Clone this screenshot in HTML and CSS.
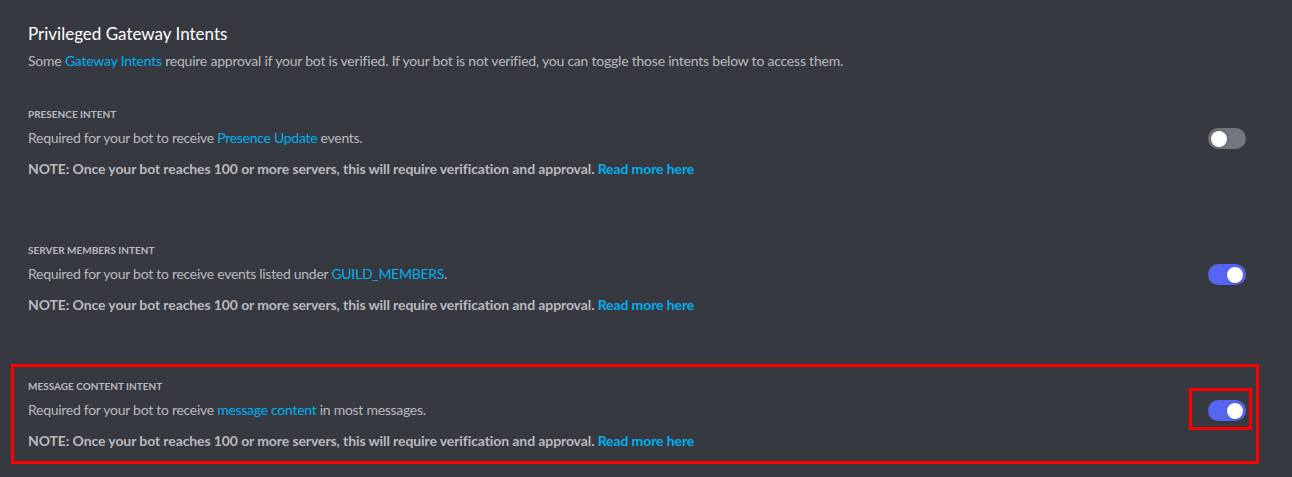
FILE: index.html
```html
<!DOCTYPE html>
<html lang="en">
<head>
<meta charset="utf-8">
<title>Privileged Gateway Intents</title>
<link rel="stylesheet" href="styles.css">
</head>
<body>
<main class="page">
  <header class="head">
    <h2 class="title">Privileged Gateway Intents</h2>
    <p class="desc">Some <a class="link" href="#">Gateway Intents</a> require approval if your bot is verified. If your bot is not verified, you can toggle those intents below to access them.</p>
  </header>

  <section class="intent">
    <h3 class="label">Presence Intent</h3>
    <div class="row">
      <p class="body">Required for your bot to receive <a class="link" href="#">Presence Update</a> events.</p>
      <div class="switch-wrap"><span class="switch off"><span class="knob"></span></span></div>
    </div>
    <p class="note">NOTE: Once your bot reaches 100 or more servers, this will require verification and approval. <a class="link strong" href="#">Read more here</a></p>
  </section>

  <section class="intent">
    <h3 class="label">Server Members Intent</h3>
    <div class="row">
      <p class="body">Required for your bot to receive events listed under <a class="link" href="#">GUILD_MEMBERS</a>.</p>
      <div class="switch-wrap"><span class="switch on"><span class="knob"></span></span></div>
    </div>
    <p class="note">NOTE: Once your bot reaches 100 or more servers, this will require verification and approval. <a class="link strong" href="#">Read more here</a></p>
  </section>

  <section class="intent highlighted">
    <h3 class="label">Message Content Intent</h3>
    <div class="row">
      <p class="body">Required for your bot to receive <a class="link" href="#">message content</a> in most messages.</p>
      <div class="switch-wrap marked"><span class="switch on"><span class="knob"></span></span></div>
    </div>
    <p class="note">NOTE: Once your bot reaches 100 or more servers, this will require verification and approval. <a class="link strong" href="#">Read more here</a></p>
  </section>
</main>
</body>
</html>
```

FILE: styles.css
```css
html, body {
  margin: 0;
  padding: 0;
  background: #36393f;
  height: 100%;
}
body {
  font-family: "Lato", "Open Sans", sans-serif;
  color: #b9bbbe;
  overflow: hidden;
}
.page {
  padding: 22px 33px 0 11px;
}
.head {
  padding-left: 17px;
}
.title {
  margin: 0;
  font-size: 17px;
  line-height: 24px;
  font-weight: 400;
  color: #ffffff;
}
.desc {
  margin: 5px 0 0;
  font-size: 14px;
  line-height: 20px;
  letter-spacing: -0.22px;
}
.link {
  color: #00b0f4;
  text-decoration: none;
}
.link.strong {
  font-weight: 700;
}
.intent {
  border: 3px solid transparent;
  padding: 12px 10px 10px 14px;
  margin-top: 36px;
}
.intent:first-of-type {
  margin-top: 21px;
}
.intent.highlighted {
  border-color: #ff0000;
}
.label {
  margin: 0;
  font-size: 10px;
  line-height: 14px;
  font-weight: 700;
  text-transform: uppercase;
  color: #b9bbbe;
}
.row {
  display: flex;
  align-items: center;
  justify-content: space-between;
  margin-top: 7px;
}
.body {
  margin: 0;
  font-size: 14px;
  line-height: 20px;
  letter-spacing: -0.28px;
}
.note {
  margin: 11px 0 0;
  font-size: 14px;
  line-height: 20px;
  font-weight: 700;
  letter-spacing: -0.1px;
}
.switch-wrap {
  position: relative;
  height: 20px;
  display: flex;
  align-items: center;
}
.switch {
  display: block;
  position: relative;
  width: 38px;
  height: 21px;
  border-radius: 11px;
  box-sizing: border-box;
}
.switch.off { background: #72767d; }
.switch.on { background: #5865f2; }
.knob {
  position: absolute;
  top: 3px;
  width: 16px;
  height: 16px;
  border-radius: 50%;
  background: #ffffff;
  box-shadow: 0 0 3px rgba(0,0,0,0.25);
}
.switch.off .knob { left: 3px; }
.switch.on .knob { right: 3px; }
.switch-wrap.marked::after {
  content: "";
  position: absolute;
  left: -19px;
  right: -6px;
  top: -12px;
  bottom: -10px;
  border: 3px solid #ff0000;
}
```
